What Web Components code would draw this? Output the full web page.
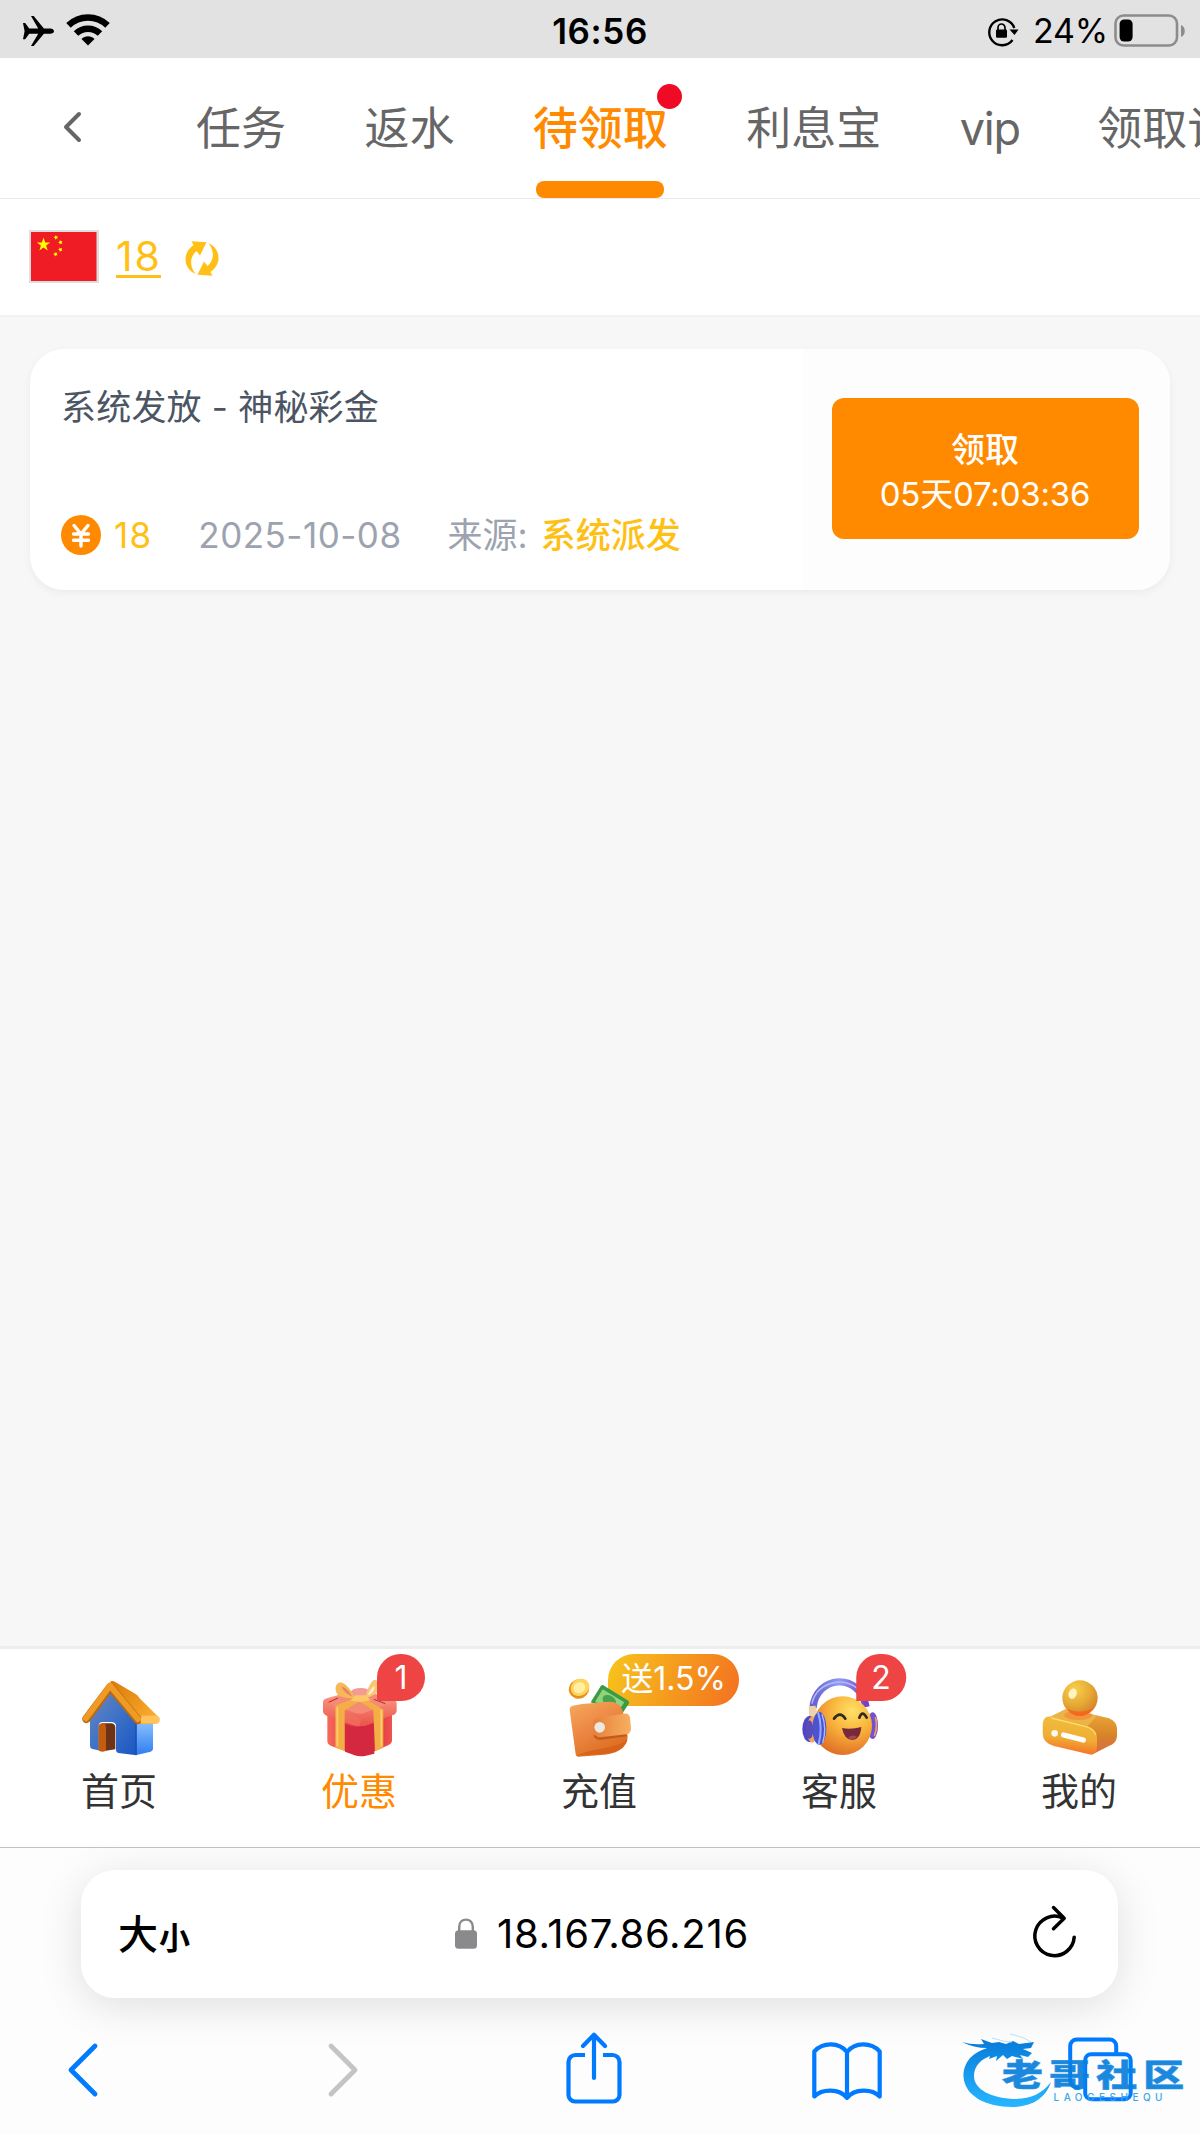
<!DOCTYPE html>
<html lang="zh-CN">
<head>
<meta charset="utf-8">
<title>待领取</title>
<style>
    body {
        margin: 0;
        width: 1200px;
        height: 2134px;
        overflow: hidden;
        display: flex;
        flex-direction: column;
        background: #f7f7f7;
        font-family: Inter, "Noto Sans CJK SC", sans-serif;
    }
    main { flex: 1; padding: 32px 30px 0; }
</style>
</head>
<body>

<status-bar time="16:56" battery="24%"></status-bar>
<nav-tabs>
    <nav-tab>任务</nav-tab>
    <nav-tab>返水</nav-tab>
    <nav-tab active>待领取</nav-tab>
    <nav-tab>利息宝</nav-tab>
    <nav-tab latin>vip</nav-tab>
    <nav-tab>领取记录</nav-tab>
</nav-tabs>
<balance-bar>18</balance-bar>
<main>
    <bonus-card>
        <span slot="title">系统发放 - 神秘彩金</span>
        <span slot="amount">18</span>
        <span slot="date">2025-10-08</span>
        <span slot="source">系统派发</span>
        <span slot="action">领取</span>
        <span slot="countdown">05天07:03:36</span>
    </bonus-card>
</main>
<tab-bar>
    <tab-item icon="home">首页</tab-item>
    <tab-item icon="gift" badge="1" active>优惠</tab-item>
    <tab-item icon="wallet" badge="送1.5%" wide>充值</tab-item>
    <tab-item icon="support" badge="2">客服</tab-item>
    <tab-item icon="user">我的</tab-item>
</tab-bar>
<browser-bar>18.167.86.216</browser-bar>

<script>
const icons = {
    plane: ['0 0 31 30', `<path d="M0 7h2.2l4 5.600h9L8 0h2.700l10.200 12.600h6.200c2.400 0 3.900 1.300 3.900 2.600s-1.500 2.600-3.900 2.600h-6.200L10.700 30H8l7.200-12.200h-9l-4 5.400H0l1.600-8z"/>`],
    wifi: ['0 0 44 33', `<g fill="none" stroke="#000" stroke-width="6.500"><path d="M2.500 12.300a28 28 0 0 1 39 0"/><path d="M10 20.500a17.500 17.500 0 0 1 24 0"/></g><path d="M22 32.500l-6.500-6.600c3.500-3.400 9.500-3.400 13 0z"/>`],
    rotate: ['0 0 32 28', `<path d="M25.500 23A12.900 12.900 0 1 1 27.300 11" fill="none" stroke="#000" stroke-width="2.400"/><path d="M22.500 12.500h9L27.500 18z"/><rect x="9" y="12.500" width="11" height="8.300" rx="1.300"/><path d="M11 13v-2.500a3.500 3.500 0 0 1 7 0V13" fill="none" stroke="#000" stroke-width="1.700"/>`],
    battery: ['0 0 72 33', `<rect x="1.500" y="1.500" width="61.500" height="30" rx="8" fill="none" stroke="#8c8c8c" stroke-width="2.600"/><rect x="5.600" y="5.500" width="13" height="22" rx="4.500"/><path d="M67 11c5 1.500 5 10.500 0 12z" fill="#8c8c8c"/>`],
    back: ['0 0 18 30', `<path d="M16 2L3 15l13 13" fill="none" stroke="#666" stroke-width="4" stroke-linecap="round" stroke-linejoin="round"/>`],
    flag: ['0 0 70 53', `<path fill="#dedede" d="M0 0h70v53H0z"/><path fill="#ef1c26" d="M2 2h65.500v49H2z"/><g fill="#ff0"><path d="M14.500 7.500l1.700 5h5l-4.100 3.100 1.600 5-4.200-3-4.100 3 1.500-5-4-3.100h5z"/><path d="M26 5.200l1.200 1 1.500-.5-.6 1.500.8 1.400-1.500-.1-1.100 1.200-.3-1.600-1.500-.7 1.400-.6zM31 10l1 1.200 1.500-.3-.8 1.400.7 1.400-1.600-.3-1.100 1.200-.1-1.600-1.500-.7 1.500-.7zM30.500 17.400l1.200 1 1.500-.5-.6 1.500.8 1.400-1.500-.1-1.100 1.200-.3-1.600-1.500-.7 1.400-.6zM25.700 22l1.200 1 1.500-.5-.6 1.500.8 1.400-1.500-.1-1.100 1.200-.3-1.600-1.500-.7 1.400-.6z"/></g>`],
    refresh: ['0 0 34 35', `<g fill="#ffc015"><path d="M6.500 .3L21.500 1.200 15 14.500 11.500 10C4.500 16 4.500 25 10.500 33-2 27-3 12 8.500 4z"/><path transform="rotate(180 17 17.500)" d="M6.500 .3L21.500 1.200 15 14.500 11.500 10C4.500 16 4.500 25 10.500 33-2 27-3 12 8.500 4z"/></g>`],
    coin: ['0 0 40 40', `<circle cx="20" cy="20" r="20" fill="#ff8a00"/><path d="M13 10.500l7 8.500 7-8.500M20 19v12M12.500 19h15M12.500 25.300h15" fill="none" stroke="#fff" stroke-width="3.400" stroke-linecap="round"/>`],
    lock: ['0 0 22 31', `<rect y="12.300" width="22" height="18.500" rx="3.500" fill="#8a8a8d"/><path d="M4.200 13V8.800c0-9.600 13.600-9.600 13.600 0V13" fill="none" stroke="#8a8a8d" stroke-width="2.400"/>`],
    reload: ['0 0 44 52', `<path d="M41.200 31.500A19.700 19.700 0 1 1 30 12.400M20.500 1.800L31.200 12.500 20.500 23" transform="translate(0 -.3)" fill="none" stroke="#000" stroke-width="3.500" stroke-linecap="round" stroke-linejoin="round"/>`],
    prev: ['0 0 31 54', `<path d="M28 3L4 27l24 24" fill="none" stroke="#007aff" stroke-width="4.800" stroke-linecap="round" stroke-linejoin="round"/>`],
    next: ['0 0 31 54', `<path d="M3 3l24 24L3 51" fill="none" stroke="#c4c4c4" stroke-width="4.800" stroke-linecap="round" stroke-linejoin="round"/>`],
    share: ['0 0 56 72', `<path d="M19 23h-9.500A7 7 0 0 0 2.500 30v33a6.500 6.500 0 0 0 6.500 6.500h38a6.500 6.500 0 0 0 6.500-6.500V30a7 7 0 0 0-7-7H37" fill="none" stroke="#007aff" stroke-width="4.200"/><path d="M28 46V3M17 14L28 2.800 39 14" fill="none" stroke="#007aff" stroke-width="4.200" stroke-linecap="round" stroke-linejoin="round"/>`],
    book: ['0 0 70 58', `<path d="M35 10C27 0 11 0 2.300 9.500v45c8-8 25-8 32.700 1.300 7.700-9.300 24.700-9.300 32.700-1.300v-45C59 0 43 0 35 10zv45" fill="none" stroke="#007aff" stroke-width="4.200" stroke-linejoin="round"/>`],
    tabs: ['0 0 66 66', `<rect x="17.200" y="17.200" width="45.500" height="45" rx="6" fill="none" stroke="#007aff" stroke-width="4"/><path d="M11.500 51C6 51 2.200 48 2.200 43V9A6.500 6.500 0 0 1 8.700 2.500h33A6.500 6.500 0 0 1 48.200 9v7" fill="none" stroke="#007aff" stroke-width="4"/>`],
    home: ['120 110 240 240', `
        <defs>
            <linearGradient id="a" x1="0" y1="0" x2="1" y2="1"><stop stop-color="#6f86b8"/><stop offset=".45" stop-color="#3f74c8"/><stop offset="1" stop-color="#1a56c4"/></linearGradient>
            <linearGradient id="b" x1="0" y1="0" x2="0" y2="1"><stop stop-color="#8cc4ff"/><stop offset="1" stop-color="#2f7df0"/></linearGradient>
            <linearGradient id="c" x1="0" y1="0" x2="1" y2="1"><stop stop-color="#d97b0c"/><stop offset=".6" stop-color="#f09a1e"/><stop offset="1" stop-color="#ffb640"/></linearGradient>
        </defs>
        <path d="M282 245l57-6v86q0 6-7 9l-46 11z" fill="url(#b)"/>
        <path d="M150 225l62-72 78 88v104l-55-7q-7-1-7-9v-71q0-12-12-13h-28q-12 0-12 12v73l-19-4q-7-2-7-8z" fill="url(#a)"/>
        <path d="M176 262q0-12 12-13h27q11 2 11 13v65l-38 6-12-3z" fill="#6e3317"/><path d="M176 256q3-7 16-7 6 2 6 12v71l-12 2-10-3z" fill="#c25d10"/>
        <path d="M288 250v92" stroke="#1447ae" stroke-width="3"/>
        <path d="M210 124q8-4 16 1l62 37q6 4 10 11l58 58q7 16-6 19l-52 1z" fill="url(#c)"/>
        <path d="M139 236l72-96 83 99" fill="none" stroke="#b86a10" stroke-width="25" stroke-linejoin="round" stroke-linecap="round"/>
        <path d="M138 234l72-98 84 100" fill="none" stroke="#ee9a25" stroke-width="18" stroke-linejoin="round" stroke-linecap="round"/>
        <path d="M304 226h46q10 1 9 12-2 11-15 11h-42z" fill="#ffc35a"/>`],
    gift: ['840 110 240 240', `
        <defs>
            <linearGradient id="a"><stop stop-color="#f8695a"/><stop offset="1" stop-color="#d92c42"/></linearGradient>
            <linearGradient id="b"><stop stop-color="#c8182f"/><stop offset="1" stop-color="#ef5350"/></linearGradient>
            <linearGradient id="c" x1="0" y1="0" x2="0" y2="1"><stop stop-color="#ffa28a"/><stop offset="1" stop-color="#e8524a"/></linearGradient>
        </defs>
        <path d="M862 218l98 30v99q-12 0-28-9l-60-22q-10-5-10-14z" fill="url(#a)"/>
        <path d="M958 248l98-26v78q0 9-10 14l-60 26q-16 8-28 7z" fill="url(#b)"/>
        <path d="M915 250q44 22 88-2v92l-25 6q-18 4-34-1l-29-11z" fill="#d42740"/>
        <path d="M849 186q0-10 14-13l78-22q20-5 38 0l78 25q13 4 13 13v22q0 10-14 14l-72 29q-22 9-46 1l-78-29q-11-4-11-14z" fill="url(#c)"/>
        <path d="M851 184l95 34q14 4 28-1l93-34-93-29q-14-4-28 0z" fill="#f58a75"/>
        <path d="M906 213l58 22-6 23-20-4-32-13z" fill="#f36d5d" opacity=".7"/>
        <path d="M886 196l50-20 28 4-50 30v122l-28-10zM1000 210l-44-28 22-6 52 32v114l-25 11z" fill="#f3ae45"/>
        <path d="M892 200v118M1024 208v110" stroke="#ffcb6f" stroke-width="5"/>
        <ellipse cx="962" cy="157" rx="30" ry="14" fill="#f49b94"/>
        <path d="M946 175c-17-2-50-2-56-17-8-18 0-30 12-32 20 5 34 29 44 49z" fill="#f6b955"/><path d="M937 169c-15-7-31-18-32-31 14 5 24 17 32 31z" fill="#e78271"/>
        <path d="M976 173c12-2 38-12 42-27 4-17-4-27-16-28-14 11-22 32-26 55z" fill="#f8c773"/><path d="M984 165c4-12 12-24 19-29 2 11-5 21-19 29z" fill="#fff0da"/>
        <path d="M946 165h32l14 15-30 5-30-4z" fill="#ffc768"/>
        <path d="M866 186l28-13M1002 177l34 13" stroke="#b52732" stroke-width="3"/>`],
    wallet: ['120 110 240 240', `
        <defs>
            <linearGradient id="a" x1="0" y1="0" x2=".6" y2="1"><stop stop-color="#f7aa5e"/><stop offset=".5" stop-color="#ec8844"/><stop offset="1" stop-color="#dc6c1d"/></linearGradient>
            <linearGradient id="b" x1="0" x2="1"><stop stop-color="#e6803b"/><stop offset="1" stop-color="#f8b05f"/></linearGradient>
        </defs>
        <path d="M212 186l31-50q3-3 7-1l75 46q4 4 1 9l-18 28z" fill="#3a9b43"/><path d="M225 185l23-38 65 39-13 19z" fill="#8fd47c"/><ellipse cx="268" cy="181" rx="22" ry="15" transform="rotate(30 268 181)" fill="#4aa34c"/>
        <ellipse cx="177" cy="146" rx="31" ry="29" transform="rotate(-25 177 146)" fill="#e79117"/><ellipse cx="180" cy="141" rx="29" ry="25" transform="rotate(-30 180 141)" fill="#ffd45f"/><ellipse cx="178" cy="142" rx="18" ry="16" transform="rotate(-30 178 142)" fill="#fff0a5"/>
        <path d="M149 209q-1-10 9-13l29-5 71-6q30-3 43 13 9 12 12 40l10 50q0 28-25 42-22 13-55 14l-67 5q-8 1-9-7z" fill="url(#a)"/>
        <path d="M168 346l76-5q45-3 64-22 12-10 14-22-20 20-80 28-42 7-74 21z" fill="#d45d16" opacity=".7"/>
        <path d="M318 279l2 9-80 11q-17-2-20-16 8 5 21 4z" fill="#b65016" opacity=".75"/>
        <path d="M219 256q0-23 20-25l74-11q14-2 17 12l3 30q1 17-14 20l-78 9q-22-1-22-35z" fill="url(#b)"/>
        <circle cx="239" cy="261" r="16" fill="#eee8e3"/>`],
    support: ['840 110 240 240', `
        <defs>
            <radialGradient id="a" cx=".66" cy=".25" r=".8"><stop stop-color="#ffe165"/><stop offset=".45" stop-color="#f9b43c"/><stop offset="1" stop-color="#df6c26"/></radialGradient>
            <linearGradient id="b"><stop stop-color="#6861cf"/><stop offset=".5" stop-color="#8c9df1"/><stop offset="1" stop-color="#7a3fc4"/></linearGradient>
        </defs>
        <ellipse cx="1058" cy="256" rx="16" ry="40" fill="#7252d1"/><path d="M1066 231q8 25-3 56" fill="none" stroke="#f0a060" stroke-width="5"/>
        <path d="M879 203C887 106 1019 92 1038 200" fill="none" stroke="url(#b)" stroke-width="22"/>
        <path d="M876 190C890 116 1000 100 1030 170" fill="none" stroke="#b0b8fa" stroke-width="5"/>
        <circle cx="968" cy="256" r="88" fill="url(#a)"/>
        <path d="M866 198l20-2 8 30-26 20z" fill="#eed2a8"/>
        <ellipse cx="869" cy="266" rx="22" ry="39" fill="#5145c5"/><ellipse cx="877" cy="268" rx="17" ry="39" fill="#f3a65c"/>
        <ellipse cx="898" cy="264" rx="21" ry="49" fill="#4b53d1"/><path d="M894 216q15 45 2 96" fill="none" stroke="#96abff" stroke-width="6"/><path d="M906 222q15 43 2 86" fill="none" stroke="#aebcff" stroke-width="4"/><ellipse cx="868" cy="268" rx="12" ry="28" fill="#594bb8"/>
        <path d="M942 235q18-24 34 0M1018 232q9-24 22 0" fill="none" stroke="#2f2b25" stroke-width="8" stroke-linecap="round"/>
        <path d="M966 263q28 5 58-3-3 38-28 39-23-1-30-36z" fill="#75293a"/><path d="M984 292q12-11 27-3-13 15-27 3z" fill="#a84450"/>`],
    user: ['300 110 240 240', `
        <defs>
            <radialGradient id="a" cx=".35" cy=".25" r=".9"><stop stop-color="#f9cf4c"/><stop offset=".5" stop-color="#e5aa35"/><stop offset=".8" stop-color="#d8892c"/><stop offset="1" stop-color="#ff5a12"/></radialGradient>
            <linearGradient id="b" x1=".4" y1="0" x2=".25" y2="1"><stop stop-color="#f1bd3e"/><stop offset=".55" stop-color="#eeae34"/><stop offset="1" stop-color="#fa6526"/></linearGradient>
            <linearGradient id="c" x1="0" y1="0" x2="0" y2="1"><stop stop-color="#edae38"/><stop offset=".6" stop-color="#d78129"/><stop offset="1" stop-color="#d86b4b"/></linearGradient>
        </defs>
        <path d="M331 229l45-22 90 17 41 10q24 10 24 33v18q0 18-14 27l-62 31z" fill="url(#c)"/>
        <path d="M333 229l44-21 94 18-28 31z" fill="#ecb347"/><ellipse cx="415" cy="225" rx="42" ry="14" fill="#f57c2b" opacity=".5"/>
        <path d="M333 229l105 27q33 9 33 37v23q0 30-24 26l-105-25q-34-9-34-38v-22q0-33 25-28z" fill="url(#b)"/>
        <path d="M334 233l104 26q24 7 29 25" fill="none" stroke="#ffdf6b" stroke-width="4"/>
        <circle cx="344" cy="279" r="10" fill="#fff8ed"/><path d="M371 284l59 15" stroke="#fff" stroke-width="16" stroke-linecap="round"/>
        <circle cx="420" cy="173" r="53" fill="url(#a)"/><path d="M381 205q38 18 78 0-15 22-39 22-26 0-39-22z" fill="#ff5714" opacity=".65"/><ellipse cx="398" cy="160" rx="12" ry="16" transform="rotate(20 398 160)" fill="#fff5c2"/>`]
};

// <ui-icon name="...">, sized by whoever uses it
class UiIcon extends HTMLElement {
    constructor() {
        super();
        this.attachShadow({ mode: 'open' });
    }

    connectedCallback() {
        const [box, shapes] = icons[this.getAttribute('name')];
        this.shadowRoot.innerHTML = `
            <style>
                :host { display: block; flex: none; }
                svg { display: block; width: 100%; height: 100%; overflow: visible; }
            </style>
            <svg viewBox="${box}">${shapes}</svg>
        `;
    }
}
customElements.define('ui-icon', UiIcon);

class StatusBar extends HTMLElement {
    constructor() {
        super();
        this.attachShadow({ mode: 'open' });
        this.shadowRoot.innerHTML = `
            <style>
                :host {
                    display: grid;
                    grid-template-columns: 1fr auto 1fr;
                    align-items: center;
                    height: 58px;
                    flex: none;
                    background: #e2e2e2;
                    font-size: 34px;
                    line-height: 58px;
                }
                div { display: flex; align-items: center; }
                .left { padding-left: 23px; gap: 12px; }
                .right { justify-content: flex-end; padding-right: 14px; }
                .plane { width: 31px; height: 32px; margin-top: 2px; }
                .wifi { width: 44px; height: 33px; margin-top: -2px; }
                .rotate { width: 32px; height: 28px; margin: 2px 14px 0 0; }
                .battery { width: 72px; height: 33px; margin: 0 0 0 6px; }
                b { font-weight: 600; font-size: 35px; letter-spacing: .6px; padding-top: 2px; }
                .level { letter-spacing: -.2px; padding-top: 2px; }
            </style>
            <div class="left"><ui-icon class="plane" name="plane"></ui-icon><ui-icon class="wifi" name="wifi"></ui-icon></div>
            <b></b>
            <div class="right"><ui-icon class="rotate" name="rotate"></ui-icon><span class="level"></span><ui-icon class="battery" name="battery"></ui-icon></div>
        `;
        this.shadowRoot.querySelector('b').textContent = this.getAttribute('time');
        this.shadowRoot.querySelector('.level').textContent = this.getAttribute('battery');
    }
}
customElements.define('status-bar', StatusBar);

class NavTabs extends HTMLElement {
    constructor() {
        super();
        this.attachShadow({ mode: 'open' });
        this.shadowRoot.innerHTML = `
            <style>
                :host {
                    display: flex;
                    align-items: center;
                    box-sizing: border-box;
                    height: 141px;
                    flex: none;
                    background: #fff;
                    border-bottom: 1px solid #e8eaf2;
                    overflow: hidden;
                }
                ui-icon { width: 18px; height: 30px; margin: -2px 115px 0 63px; }
                .tabs { display: flex; gap: 78.400px; height: 100%; }
            </style>
            <ui-icon name="back"></ui-icon>
            <div class="tabs"><slot></slot></div>
        `;
    }
}
customElements.define('nav-tabs', NavTabs);

class NavTab extends HTMLElement {
    constructor() {
        super();
        this.attachShadow({ mode: 'open' });
        this.shadowRoot.innerHTML = `
            <style>
                :host {
                    display: block;
                    position: relative;
                    flex: none;
                    font-size: 45px;
                    line-height: 141px;
                    white-space: nowrap;
                    color: #666;
                }
                :host([active]) { color: #ff8a00; font-weight: 500; }
                :host([latin]) { letter-spacing: -1.200px; margin-right: -1px; }
                i { display: none; }
                :host([active]) i { display: block; position: absolute; }
                .dot { width: 25px; height: 25px; border-radius: 50%; background: #f00a25; top: 26px; right: -14px; }
                .line { left: 3px; right: 4px; bottom: 0; height: 17px; border-radius: 8px; background: #ff8a00; }
            </style>
            <slot></slot><i class="dot"></i><i class="line"></i>
        `;
    }
}
customElements.define('nav-tab', NavTab);

class BalanceBar extends HTMLElement {
    constructor() {
        super();
        this.attachShadow({ mode: 'open' });
        this.shadowRoot.innerHTML = `
            <style>
                :host {
                    display: flex;
                    align-items: center;
                    box-sizing: border-box;
                    height: 118px;
                    flex: none;
                    padding-left: 29px;
                    background: #fff;
                    border-bottom: 2px solid #f2f2f2;
                }
                .flag { width: 70px; height: 53px; margin-top: -1px; }
                .refresh { width: 34px; height: 35px; margin-top: 3px; }
                span {
                    margin: 1px 24px 0 17px;
                    height: 37px;
                    font-size: 41px;
                    line-height: 37px;
                    letter-spacing: 1.700px;
                    color: #ffc015;
                    border-bottom: 3px solid;
                }
            </style>
            <ui-icon class="flag" name="flag"></ui-icon>
            <span><slot></slot></span>
            <ui-icon class="refresh" name="refresh"></ui-icon>
        `;
    }
}
customElements.define('balance-bar', BalanceBar);

class BonusCard extends HTMLElement {
    constructor() {
        super();
        this.attachShadow({ mode: 'open' });
        this.shadowRoot.innerHTML = `
            <style>
                :host {
                    display: flex;
                    height: 241px;
                    border-radius: 34px;
                    overflow: hidden;
                    background: #fff;
                    box-shadow: 0 3px 8px rgba(0, 0, 0, .05);
                    font-size: 35px;
                    line-height: 50px;
                }
                .info {
                    flex: 1;
                    display: flex;
                    flex-direction: column;
                    justify-content: space-between;
                    padding: 33px 0 30px 31px;
                }
                .title { color: #4b5563; letter-spacing: .2px; }
                .meta { display: flex; align-items: center; color: #9ca3af; }
                ui-icon { width: 40px; height: 40px; margin-right: 13px; }
                .amount { color: #ffc015; letter-spacing: 1.200px; }
                .date { margin: 0 46px; letter-spacing: .5px; }
                .source { color: #ffc015; font-weight: 500; margin-left: 13px; }
                .side {
                    width: 367px;
                    display: flex;
                    align-items: center;
                    background: #fdfdfd;
                }
                button {
                    width: 307px;
                    height: 141px;
                    margin: -2px 0 0 29px;
                    padding: 6px 1px 0 0;
                    border: 0;
                    border-radius: 12px;
                    background: #ff8a00;
                    color: #fff;
                    font: 34px/45px Inter, "Noto Sans CJK SC", sans-serif;
                }
                button b { display: block; font-weight: 500; }
                .countdown { display: block; letter-spacing: -.2px; font-size: 33px; }
            </style>
            <div class="info">
                <div class="title"><slot name="title"></slot></div>
                <div class="meta">
                    <ui-icon name="coin"></ui-icon>
                    <span class="amount"><slot name="amount"></slot></span>
                    <span class="date"><slot name="date"></slot></span>
                    <span>来源:</span>
                    <span class="source"><slot name="source"></slot></span>
                </div>
            </div>
            <div class="side">
                <button><b><slot name="action"></slot></b><span class="countdown"><slot name="countdown"></slot></span></button>
            </div>
        `;
    }
}
customElements.define('bonus-card', BonusCard);

class TabBar extends HTMLElement {
    constructor() {
        super();
        this.attachShadow({ mode: 'open' });
        this.shadowRoot.innerHTML = `
            <style>
                :host {
                    display: grid;
                    grid-template-columns: repeat(5, 1fr);
                    box-sizing: border-box;
                    height: 201px;
                    flex: none;
                    background: #fff;
                    border-top: 3px solid #eee;
                }
            </style>
            <slot></slot>
        `;
    }
}
customElements.define('tab-bar', TabBar);

class TabItem extends HTMLElement {
    constructor() {
        super();
        this.attachShadow({ mode: 'open' });
        this.shadowRoot.innerHTML = `
            <style>
                :host {
                    display: flex;
                    flex-direction: column;
                    align-items: center;
                    position: relative;
                    padding: 28px 2px 0 0;
                    font-size: 38px;
                    line-height: 50px;
                    color: #333;
                }
                :host([active]) { color: #ff8a00; }
                ui-icon { width: 80px; height: 80px; margin: 0 0 9px 2px; }
                .badge {
                    position: absolute;
                    left: 161px;
                    top: 5px;
                    transform: translateX(-50%);
                    box-sizing: border-box;
                    min-width: 48px;
                    height: 47px;
                    padding: 0 15px;
                    border-radius: 24px 24px 24px 0;
                    background: #ef4444;
                    color: #fff;
                    font-size: 32px;
                    line-height: 48px;
                    text-align: center;
                }
                .badge:empty { display: none; }
                :host([wide]) .badge {
                    left: 128px;
                    transform: none;
                    width: 131px;
                    height: 52px;
                    padding: 0;
                    border-radius: 26px 26px 26px 0;
                    line-height: 50px;
                    background: linear-gradient(110deg, #f7c51c, #f37021);
                }
                :host([wide]) ui-icon { z-index: 1; }
            </style>
            <ui-icon name="${this.getAttribute('icon')}"></ui-icon>
            <slot></slot>
            <span class="badge"></span>
        `;
        this.shadowRoot.querySelector('.badge').textContent = this.getAttribute('badge') || '';
    }
}
customElements.define('tab-item', TabItem);

class SiteMark extends HTMLElement {
    constructor() {
        super();
        this.attachShadow({ mode: 'open' });
        this.shadowRoot.innerHTML = `
            <style>
                :host { display: block; pointer-events: none; }
                svg { display: block; overflow: visible; }
            </style>
            <svg width="222" height="78" viewBox="0 0 222 78">
                <defs><linearGradient id="g" gradientUnits="userSpaceOnUse" x1="0" y1="10" x2="0" y2="72"><stop stop-color="#087fdc"/><stop offset="1" stop-color="#27b5ff"/></linearGradient></defs>
                <path fill="url(#g)" d="M30 13C10 17 1 29 1.500 43 3 62 24 73 50 73c20 0 34-9 39-25C80 60 68 65 52 65 30 64 12 56 12 42c0-10 7-18 20-21z"/>
                <path fill="url(#g)" d="M0 8Q10 11 22 10L19 5 30 9 37 8 44 10 51 7 57 10 72 8 69 14 61 15 70 19 66 23 58 21 61 25 50 22 45 25 41 21 34 27 35 22 27 25 29 19 22 18 25 14Q12 14 0 8z"/>
                <path d="M30 4q12 4 20 4M48 0q14 3 21 8" fill="none" stroke="#b6e0fa" stroke-width="1"/>
                <text transform="translate(40 52) scale(1.320 1)" textLength="138" fill="url(#g)" font-family="Noto Sans CJK SC, sans-serif" font-weight="900" font-size="31" opacity=".92" stroke="#128be4" stroke-width=".5">老哥社区</text>
                <text x="91.500" y="67" textLength="109" font-family="Inter, sans-serif" font-weight="500" font-size="10" fill="#3ba5ed">LAOGESHEQU</text>
            </svg>
        `;
    }
}
customElements.define('site-mark', SiteMark);

class BrowserBar extends HTMLElement {
    constructor() {
        super();
        this.attachShadow({ mode: 'open' });
        this.shadowRoot.innerHTML = `
            <style>
                :host {
                    display: block;
                    position: relative;
                    box-sizing: border-box;
                    height: 287px;
                    flex: none;
                    padding: 22px 82px 0 81px;
                    border-top: 1px solid #c3c3c3;
                    background: #fdfdfd;
                }
                .address {
                    display: grid;
                    grid-template-columns: 1fr auto 1fr;
                    align-items: center;
                    height: 128px;
                    border-radius: 34px;
                    background: #fff;
                    box-shadow: 0 8px 44px rgba(0, 0, 0, .12);
                    font-size: 40px;
                    line-height: 50px;
                }
                .size { padding: 4px 0 0 37px; font-weight: 500; display: flex; align-items: baseline; }
                .size small { font-size: 31px; margin-left: 1px; font-weight: 700; }
                .host { display: flex; align-items: center; gap: 20px; letter-spacing: .7px; padding-left: 5px; }
                .lock { width: 22px; height: 31px; margin-top: -1px; }
                .reload { width: 44px; height: 52px; justify-self: end; margin: -4px 41px 0 0; }
                .tools {
                    display: flex;
                    align-items: flex-start;
                    margin: 34px -82px 0 -81px;
                    padding-left: 67px;
                }
                .prev, .next { width: 31px; height: 54px; margin-top: 11px; }
                .next { margin-left: 229.500px; }
                .share { width: 56px; height: 72px; margin-left: 207px; }
                .book { width: 70px; height: 58px; margin: 10px 0 0 190px; }
                .tabs { width: 66px; height: 66px; margin: 5px 0 0 186px; }
                site-mark { position: absolute; left: 962px; top: 186px; }
            </style>
            <div class="address">
                <div class="size">大<small>小</small></div>
                <div class="host"><ui-icon class="lock" name="lock"></ui-icon><span><slot></slot></span></div>
                <ui-icon class="reload" name="reload"></ui-icon>
            </div>
            <div class="tools">
                <ui-icon class="prev" name="prev"></ui-icon>
                <ui-icon class="next" name="next"></ui-icon>
                <ui-icon class="share" name="share"></ui-icon>
                <ui-icon class="book" name="book"></ui-icon>
                <ui-icon class="tabs" name="tabs"></ui-icon>
            </div>
            <site-mark></site-mark>
        `;
    }
}
customElements.define('browser-bar', BrowserBar);
</script>
</body>
</html>
